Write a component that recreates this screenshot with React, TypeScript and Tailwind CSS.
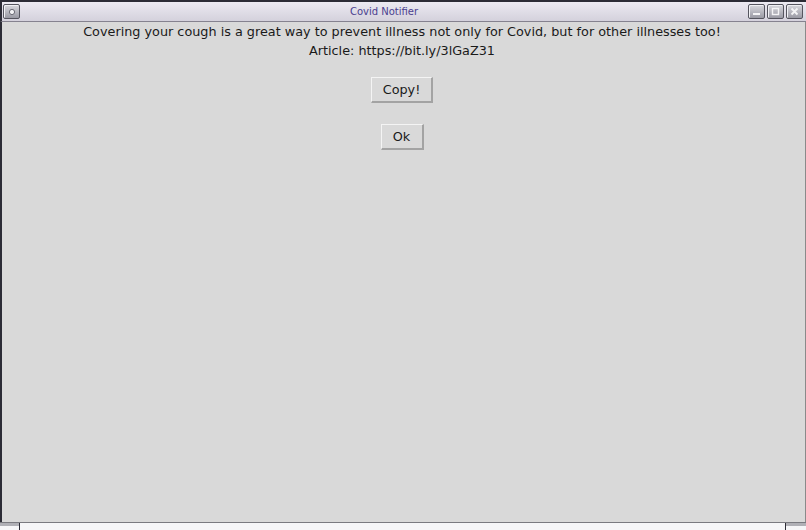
import React from "react";

const font = { fontFamily: '"DejaVu Sans", Verdana, sans-serif' };

function FrameButton({ children }: { children: React.ReactNode }) {
  return (
    <div className="w-[17px] h-[15px] rounded-[2px] border border-[#55555f] bg-gradient-to-b from-[#d8d8de] to-[#9a9aa4] flex items-center justify-center shadow-[inset_1px_1px_0_#f0f0f4]">
      {children}
    </div>
  );
}

function TkButton({ label, width }: { label: string; width: string }) {
  return (
    <button
      type="button"
      className={`${width} h-[26px] bg-[#d9d9d9] text-[12.8px] text-[#1a1a1a] border-t border-l border-t-[#f4f4f4] border-l-[#f4f4f4] border-b-2 border-r-2 border-b-[#a3a3a3] border-r-[#a3a3a3] flex items-center justify-center`}
    >
      {label}
    </button>
  );
}

export default function App() {
  return (
    <div className="w-[806px] h-[530px] flex flex-col bg-[#d9d9d9] overflow-hidden" style={font}>
      <div className="h-[2px] bg-[#2c2c36]" />
      <div className="h-[20px] flex items-center bg-gradient-to-b from-[#eceaf2] to-[#d4d1dc] border-b border-[#85828f] border-l-2 border-l-[#2c2c36] pl-[1px] pr-[3px]">
        <FrameButton>
          <svg width="8" height="8" viewBox="0 0 8 8">
            <circle cx="4" cy="4" r="2.6" fill="#f4f4f6" stroke="#6a6a74" strokeWidth="1" />
          </svg>
        </FrameButton>
        <div className="flex-1 text-center text-[10px] leading-none text-[#4b3f8f]">Covid Notifier</div>
        <div className="flex gap-[2px]">
          <FrameButton>
            <svg width="9" height="9" viewBox="0 0 9 9">
              <rect x="1" y="6" width="7" height="2" fill="#f4f4f6" />
            </svg>
          </FrameButton>
          <FrameButton>
            <svg width="9" height="9" viewBox="0 0 9 9">
              <rect x="1.5" y="1.5" width="6" height="6" fill="none" stroke="#f4f4f6" strokeWidth="1.4" />
            </svg>
          </FrameButton>
          <FrameButton>
            <svg width="9" height="9" viewBox="0 0 9 9">
              <path d="M1.5 1.5L7.5 7.5M7.5 1.5L1.5 7.5" stroke="#f4f4f6" strokeWidth="1.8" />
            </svg>
          </FrameButton>
        </div>
      </div>
      <div className="flex-1 flex flex-col items-center border-l-2 border-l-[#2c2c36] border-r border-r-[#8a8a8a] pr-[3px]">
        <div className="text-[12.8px] leading-[19px] text-[#1a1a1a] text-center">
          <div>Covering your cough is a great way to prevent illness not only for Covid, but for other illnesses too!</div>
          <div>Article: https://bit.ly/3lGaZ31</div>
        </div>
        <div className="mt-[17px]">
          <TkButton label="Copy!" width="w-[62px]" />
        </div>
        <div className="mt-[21px]">
          <TkButton label="Ok" width="w-[43px]" />
        </div>
      </div>
      <div className="h-[8px] flex flex-col">
        <div className="h-[1px] bg-[#7a7a80]" />
        <div className="flex-1 flex bg-[#f6f6f8]">
          <div className="w-[19px] h-[3px] bg-[#b0b0b6]" />
          <div className="w-[1px] bg-[#2c2c36]" />
          <div className="flex-1" />
          <div className="w-[1px] bg-[#2c2c36]" />
          <div className="w-[20px] h-[3px] bg-[#b0b0b6]" />
        </div>
      </div>
    </div>
  );
}
